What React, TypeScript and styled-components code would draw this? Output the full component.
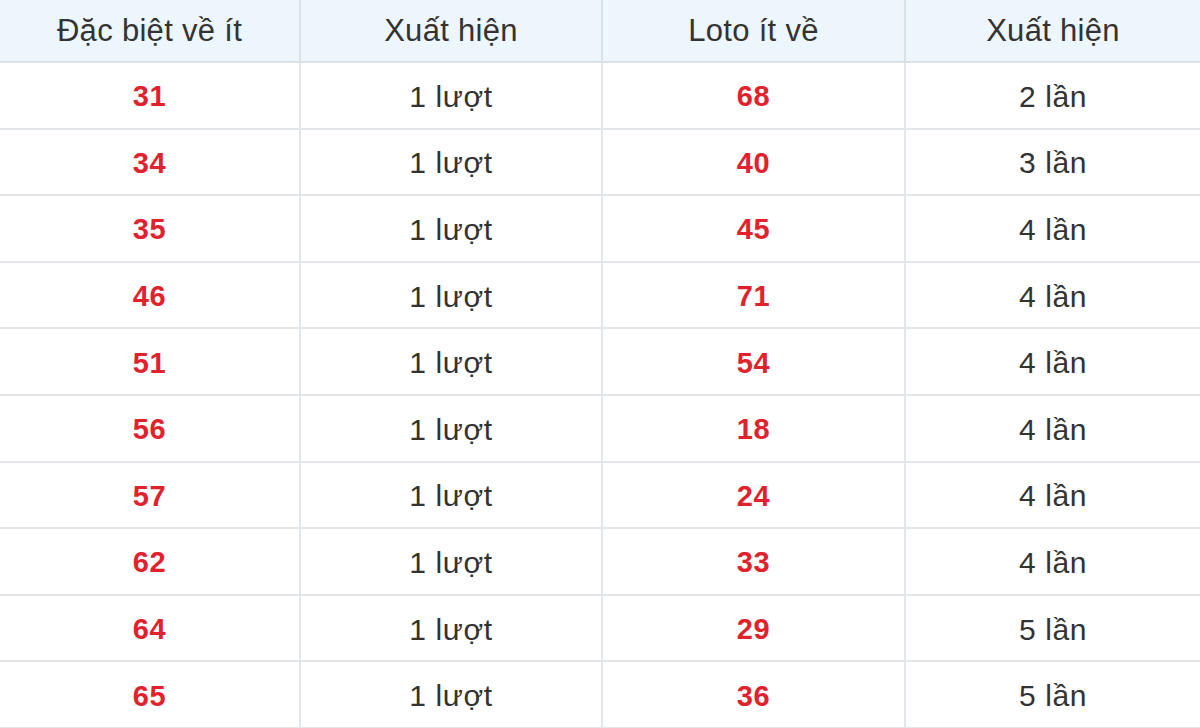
import React from "react";
import styled, { createGlobalStyle } from "styled-components";

const Global = createGlobalStyle`
  html, body { margin: 0; padding: 0; background: #ffffff; }
  body { font-family: "Liberation Sans", Arial, sans-serif; overflow: hidden; }
`;

const Wrap = styled.div`
  width: 1200px;
  height: 728px;
  overflow: hidden;
`;

const Grid = styled.div`
  display: grid;
  grid-template-columns: 301px 302px 303px 1fr;
  grid-template-rows: 63px repeat(10, 66.6px);
`;

const HeadCell = styled.div<{ $last?: boolean }>`
  display: flex;
  align-items: center;
  justify-content: center;
  background: #edf5fd;
  color: #333333;
  font-size: 31px;
  letter-spacing: 0.3px;
  border-bottom: 2px solid #dde1e6;
  border-right: ${(p) => (p.$last ? "none" : "2px solid #dde1e6")};
  padding-top: 1px;
`;

const Cell = styled.div<{ $last?: boolean; $num?: boolean }>`
  display: flex;
  align-items: center;
  justify-content: center;
  color: ${(p) => (p.$num ? "#e1222d" : "#333333")};
  font-weight: ${(p) => (p.$num ? 700 : 400)};
  font-size: ${(p) => (p.$num ? "29px" : "30px")};
  letter-spacing: ${(p) => (p.$num ? "0.5px" : "0.6px")};
  border-bottom: 2px solid #e3e6ea;
  border-right: ${(p) => (p.$last ? "none" : "2px solid #e3e6ea")};
  padding-top: 3px;
`;

const rows: [string, string, string, string][] = [
  ["31", "1 lượt", "68", "2 lần"],
  ["34", "1 lượt", "40", "3 lần"],
  ["35", "1 lượt", "45", "4 lần"],
  ["46", "1 lượt", "71", "4 lần"],
  ["51", "1 lượt", "54", "4 lần"],
  ["56", "1 lượt", "18", "4 lần"],
  ["57", "1 lượt", "24", "4 lần"],
  ["62", "1 lượt", "33", "4 lần"],
  ["64", "1 lượt", "29", "5 lần"],
  ["65", "1 lượt", "36", "5 lần"],
];

export default function App() {
  return (
    <Wrap>
      <Global />
      <Grid>
        <HeadCell>Đặc biệt về ít</HeadCell>
        <HeadCell>Xuất hiện</HeadCell>
        <HeadCell>Loto ít về</HeadCell>
        <HeadCell $last>Xuất hiện</HeadCell>
        {rows.map((r, i) => (
          <React.Fragment key={i}>
            <Cell $num>{r[0]}</Cell>
            <Cell>{r[1]}</Cell>
            <Cell $num>{r[2]}</Cell>
            <Cell $last>{r[3]}</Cell>
          </React.Fragment>
        ))}
      </Grid>
    </Wrap>
  );
}
